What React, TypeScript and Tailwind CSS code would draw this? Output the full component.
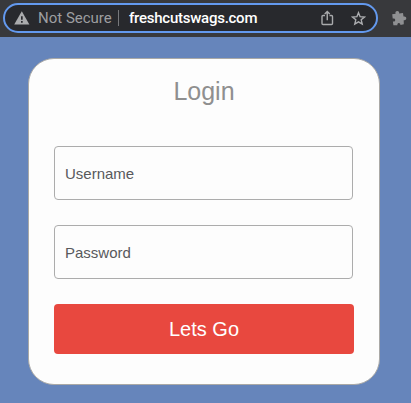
function WarningIcon() {
  return (
    <svg className="ml-[9px] shrink-0" width="16" height="14" viewBox="0 0 16 14">
      <path d="M7.8 .3 15.4 13.4H.2Z" fill="#aaabad" />
      <path d="M7 5.2h1.7v3.5H7zM7 10h1.7v1.7H7z" fill="#28292d" />
    </svg>
  );
}

function ShareIcon() {
  return (
    <svg width="13" height="16" viewBox="0 0 13 16" fill="none" stroke="#a9aaac" strokeWidth="1.4">
      <path d="M4 5.500H2a1 1 0 0 0-1 1v7a1 1 0 0 0 1 1h8.500a1 1 0 0 0 1-1v-7a1 1 0 0 0-1-1h-2M6.250 10.300V1.500M3.700 4 6.250 1.500 8.800 4" />
    </svg>
  );
}

function StarIcon() {
  return (
    <svg width="15" height="15" viewBox="0 0 15 15" fill="none" stroke="#acadb0" strokeWidth="1.4">
      <path d="M7.500 1.700 9.100 5.700 13.500 6 10.200 8.800 11.200 13.100 7.500 10.800 3.800 13.100 4.800 8.800 1.500 6 5.900 5.700Z" />
    </svg>
  );
}

function PuzzleIcon() {
  return (
    <svg width="16" height="16" viewBox="0 0 16 16" fill="#8f9092">
      <path d="M1.200 4.300 4.600 3.700C4 2.300 4.900 1 6.300 1s2.200 1.100 1.900 2.400L12 3.100l.5 3.500c1.500-.5 2.800.3 2.800 1.700s-1.200 2.300-2.600 1.900l.1 4.100-3.400.6c0-1.300-.7-2-1.700-1.900s-1.500.9-1.300 2.200l-4 .1-.5-3.800c1.500.2 2.400-.4 2.300-1.500S3.200 8.400 1.700 8.600Z" />
    </svg>
  );
}

function Field({ label }: { label: string }) {
  return (
    <div className="flex h-[54px] w-[299px] items-center rounded border border-[#acacac] pl-[10px] pt-[2px] text-[15px] text-[#58595c]">
      {label}
    </div>
  );
}

export default function App() {
  return (
    <div className="flex h-[403px] w-[411px] flex-col overflow-hidden bg-[#6685bb] font-['Liberation_Sans',Arial,sans-serif]">
      <header className="flex h-[37px] shrink-0 items-start bg-[#38393c] pl-[3px] pt-[3px]">
        <div className="flex h-[30px] w-[375px] shrink-0 items-center rounded-full border-2 border-[#6399ee] bg-[#28292d] font-[Roboto,sans-serif] text-[15px]">
          <WarningIcon />
          <span className="ml-[8px] w-[74px] whitespace-nowrap text-[#9d9ea0]">Not Secure</span>
          <span className="ml-[6px] h-[16px] w-px bg-[#77787b]" />
          <span className="ml-[10px] w-[130px] whitespace-nowrap font-medium tracking-[-0.25px] text-white">freshcutswags.com</span>
          <span className="ml-[62px] flex items-center gap-[17px]">
            <ShareIcon />
            <StarIcon />
          </span>
        </div>
        <span className="ml-[13px] mt-[7px] shrink-0">
          <PuzzleIcon />
        </span>
      </header>
      <main className="ml-[28px] mt-[21px] flex h-[327px] w-[352px] flex-col rounded-[26px] border border-[#aaa9a6] bg-[#fdfdfd] pl-[25px]">
        <h1 className="mt-[17px] h-[30px] w-[300px] text-center text-[25px] leading-[30px] text-[#8f8f8f]">Login</h1>
        <div className="mt-[40px] flex flex-col gap-[25px]">
          <Field label="Username" />
          <Field label="Password" />
          <button className="h-[50px] w-[300px] rounded bg-[#e8483f] text-[20px] text-white">Lets Go</button>
        </div>
      </main>
    </div>
  );
}
